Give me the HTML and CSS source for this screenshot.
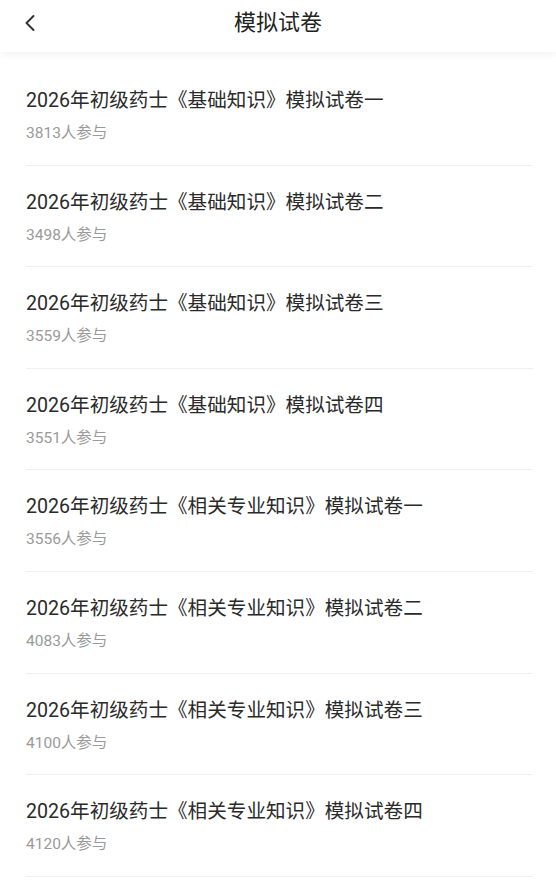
FILE: index.html
```html
<!DOCTYPE html>
<html>
  <head>
    <title>模拟试卷</title>
    <meta charset="utf-8" />
    <link rel="stylesheet" href="styles.css">
  </head>
  <body>
    <div class="header">
      <span class="back">
        <svg width="12" height="18" viewBox="0 0 12 18">
          <path d="M9.5 2 L2.5 9 L9.5 16" fill="none" stroke="#333" stroke-width="2" stroke-linecap="round" stroke-linejoin="round" />
        </svg>
      </span>
      <h1 class="title">模拟试卷</h1>
    </div>

    <ul class="paper-list">
      <li class="paper-item">
        <div class="paper-name">2026年初级药士《基础知识》模拟试卷一</div>
        <div class="paper-count">3813人参与</div>
      </li>
      <li class="paper-item">
        <div class="paper-name">2026年初级药士《基础知识》模拟试卷二</div>
        <div class="paper-count">3498人参与</div>
      </li>
      <li class="paper-item">
        <div class="paper-name">2026年初级药士《基础知识》模拟试卷三</div>
        <div class="paper-count">3559人参与</div>
      </li>
      <li class="paper-item">
        <div class="paper-name">2026年初级药士《基础知识》模拟试卷四</div>
        <div class="paper-count">3551人参与</div>
      </li>
      <li class="paper-item">
        <div class="paper-name">2026年初级药士《相关专业知识》模拟试卷一</div>
        <div class="paper-count">3556人参与</div>
      </li>
      <li class="paper-item">
        <div class="paper-name">2026年初级药士《相关专业知识》模拟试卷二</div>
        <div class="paper-count">4083人参与</div>
      </li>
      <li class="paper-item">
        <div class="paper-name">2026年初级药士《相关专业知识》模拟试卷三</div>
        <div class="paper-count">4100人参与</div>
      </li>
      <li class="paper-item">
        <div class="paper-name">2026年初级药士《相关专业知识》模拟试卷四</div>
        <div class="paper-count">4120人参与</div>
      </li>
    </ul>
  </body>
</html>
```

FILE: styles.css
```css
body {
  margin: 0;
  font-family: Roboto, "Noto Sans CJK SC", sans-serif;
  color: #222;
  background-color: #fff;
  overflow: hidden;
}

.header {
  position: relative;
  height: 52px;
  display: flex;
  align-items: center;
  justify-content: center;
  background-color: #fff;
  box-shadow: 0 2px 8px rgba(0, 0, 0, 0.06);
}

.back {
  position: absolute;
  left: 24px;
  top: 14px;
  display: flex;
}

.title {
  margin: 0;
  font-size: 22px;
  font-weight: normal;
  color: #222;
  line-height: 1;
  margin-top: -6px;
}

.paper-list {
  list-style: none;
  margin: 0;
  padding: 12px 0 0;
}

.paper-item {
  height: 101.6px;
  box-sizing: border-box;
  margin: 0 23px 0 26px;
  padding-top: 24px;
  border-bottom: 1px solid #efefef;
}

.paper-name {
  font-size: 19.6px;
  line-height: 26px;
  color: #2a2a2a;
}

.paper-count {
  margin-top: 10px;
  font-size: 15.5px;
  line-height: 18px;
  color: #9a9a9a;
}
```
